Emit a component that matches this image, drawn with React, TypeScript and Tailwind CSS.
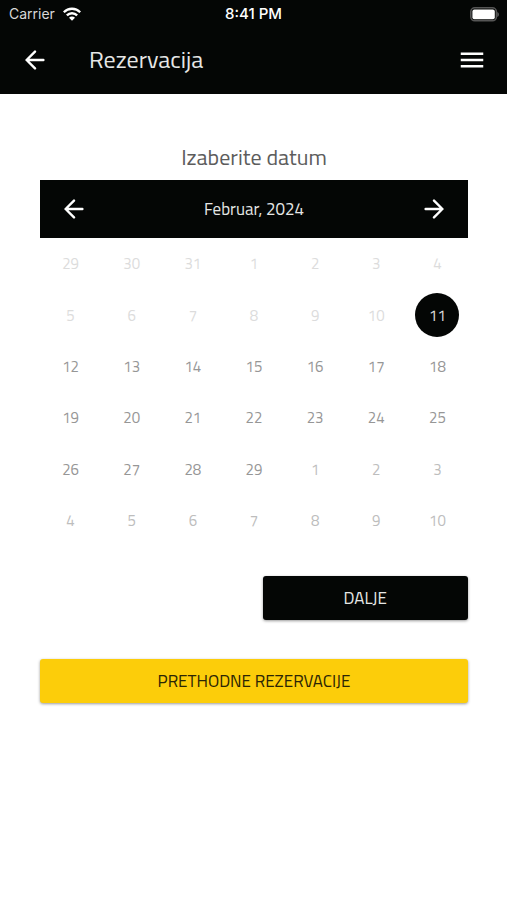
import { useState } from 'react'
import { MdMenu } from 'react-icons/md'
import clsx from 'clsx'

type Day = { id: string; label: number; tone: 'past' | 'open' | 'next' }

const range = (from: number, to: number, month: string, tone: Day['tone']): Day[] =>
  Array.from({ length: to - from + 1 }, (_, i) => ({ id: `${month}-${from + i}`, label: from + i, tone }))

const days: Day[] = [
  ...range(29, 31, '2024-1', 'past'),
  ...range(1, 10, '2024-2', 'past'),
  ...range(11, 29, '2024-2', 'open'),
  ...range(1, 10, '2024-3', 'next'),
]

function Arrow({ forward = false }: { forward?: boolean }) {
  return (
    <svg
      width="20"
      height="20"
      viewBox="0 0 20 20"
      fill="none"
      stroke="currentColor"
      strokeWidth="2.4"
      strokeLinecap="round"
      strokeLinejoin="round"
      aria-hidden="true"
    >
      <path d={forward ? 'M1.6 10H18.4M10 1.6 18.4 10 10 18.4' : 'M18.4 10H1.6M10 1.6 1.6 10 10 18.4'} />
    </svg>
  )
}

function StatusBar() {
  return (
    <div className="grid h-7 grid-cols-3 items-center px-2 font-['Inter',sans-serif] text-sm text-white">
      <div className="flex items-center gap-2 pl-px">
        <span className="text-[#d8d8d8]">Carrier</span>
        <svg width="18" height="14" viewBox="0 0 18 14" fill="#fff" aria-hidden="true">
          <path d="M0 4.4a12.6 12.6 0 0 1 18 0l-1.6 1.7a10.4 10.4 0 0 0-14.8 0z" />
          <path d="M3 7.6a8.4 8.4 0 0 1 12 0l-1.7 1.7a6.1 6.1 0 0 0-8.6 0z" />
          <path d="M9 13.8 6 10.7a4.2 4.2 0 0 1 6 0z" />
        </svg>
      </div>
      <span className="text-center text-[15px] font-medium">8:41 PM</span>
      <svg className="justify-self-end" width="31" height="15" viewBox="0 0 31 15" aria-hidden="true">
        <rect x="2.8" y="0.8" width="25.6" height="13" rx="4" fill="none" stroke="#555" strokeWidth="1.6" />
        <rect x="4.4" y="2.4" width="22.4" height="9.8" rx="2" fill="#fff" />
        <path d="M29.2 5v5c2.4-1 2.4-4 0-5z" fill="#555" />
      </svg>
    </div>
  )
}

export default function App() {
  const [selected, setSelected] = useState('2024-2-11')

  return (
    <div className="min-h-screen bg-white font-['Titillium_Web','Roboto',sans-serif]">
      <header className="bg-[#040605] pb-0.5 text-white">
        <StatusBar />
        <div className="flex h-16 items-center px-[19px]">
          <button type="button" aria-label="Nazad" className="flex size-8 items-center justify-center">
            <Arrow />
          </button>
          <h1 className="flex-1 pb-0.5 pl-[38px] text-2xl text-[#e6e6e6]">Rezervacija</h1>
          <button type="button" aria-label="Meni" className="flex size-8 items-center justify-center">
            <MdMenu size={30} />
          </button>
        </div>
      </header>

      <main className="pt-[47px] pr-[39px] pl-10">
        <h2 className="pb-[7px] text-center text-[22px] leading-8 text-[#5c5c5c]">Izaberite datum</h2>

        <div className="flex h-[58px] items-center justify-between bg-[#040605] px-6 text-white">
          <button type="button" aria-label="Prethodni mesec">
            <Arrow />
          </button>
          <span className="pt-0.5 text-[17px] text-[#e6e6e6]">Februar, 2024</span>
          <button type="button" aria-label="Sledeći mesec">
            <Arrow forward />
          </button>
        </div>

        <div className="grid h-[308px] grid-cols-7 grid-rows-6 place-items-center">
          {days.map((day) => (
            <button
              key={day.id}
              type="button"
              disabled={day.tone === 'past'}
              onClick={() => setSelected(day.id)}
              className={clsx(
                'flex size-11 items-center justify-center rounded-full pt-0.5 text-[15px]',
                day.id === selected && 'bg-[#040605] text-[#e0e0e0]',
                day.id !== selected && day.tone === 'past' && 'text-[#dcdcdc]',
                day.id !== selected && day.tone === 'open' && 'text-[#969696]',
                day.id !== selected && day.tone === 'next' && 'text-[#bdbdbd]',
              )}
            >
              {day.label}
            </button>
          ))}
        </div>

        <div className="flex justify-end pt-[30px]">
          <button
            type="button"
            className="h-11 w-12/25 rounded-[3px] bg-[#040605] pt-0.5 text-[17px] text-[#e6e6e6] shadow-[0_1px_3px_rgba(0,0,0,0.4)]"
          >
            DALJE
          </button>
        </div>
        <button
          type="button"
          className="mt-[39px] h-11 w-full rounded-[3px] bg-[#fccd0a] pt-0.5 text-[17px] text-[#2b2505] shadow-[0_1px_3px_rgba(0,0,0,0.4)]"
        >
          PRETHODNE REZERVACIJE
        </button>
      </main>
    </div>
  )
}
